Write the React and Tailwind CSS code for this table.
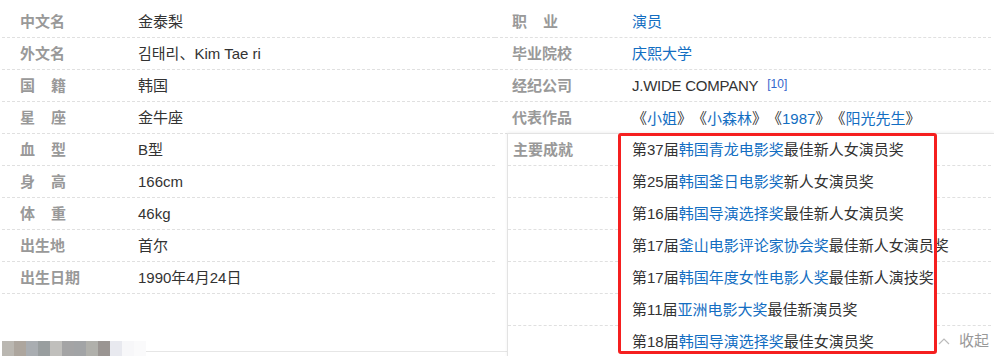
const font = { fontFamily: '"Liberation Sans", Arial, "Noto Sans CJK SC", "Noto Sans CJK KR", sans-serif' };

function Label({ text, wide }) {
  if (wide) {
    return (
      <span className="inline-flex w-[46px] justify-between">
        <span>{text[0]}</span>
        <span>{text[1]}</span>
      </span>
    );
  }
  return <span>{text}</span>;
}

function Row({ label, wide, children, labelPad = 'pl-[18px]', labelWidth = 'w-[136px]' }) {
  return (
    <div className="flex h-[32px] border-b border-dashed border-[#e0e0e0] leading-[31px]">
      <div className={`${labelWidth} ${labelPad} shrink-0 font-bold text-[#999]`}>
        <Label text={label} wide={wide} />
      </div>
      <div className="text-[#333] whitespace-nowrap">{children}</div>
    </div>
  );
}

const A = ({ children }) => <span className="text-[#136ec2]">{children}</span>;
const Q = ({ children }) => (
  <span className="inline-block w-[15px] text-center font-['Noto_Sans_CJK_SC',sans-serif]">{children}</span>
);

const mosaic = ['#bab7b1', '#ada69e', '#a9adb1', '#999e9f', '#c0bfbc', '#a4a4a5', '#a2a4a6', '#b0b0ab', '#9a9592', '#e8e9ef', '#f7f7f9', '#fafafb'];

const awards = [
  ['第37届', '韩国青龙电影奖', '最佳新人女演员奖'],
  ['第25届', '韩国釜日电影奖', '新人女演员奖'],
  ['第16届', '韩国导演选择奖', '最佳新人女演员奖'],
  ['第17届', '釜山电影评论家协会奖', '最佳新人女演员奖'],
  ['第17届', '韩国年度女性电影人奖', '最佳新人演技奖'],
  ['第11届', '亚洲电影大奖', '最佳新演员奖'],
  ['第18届', '韩国导演选择奖', '最佳女演员奖'],
];

export default function App() {
  return (
    <div className="relative h-[356px] w-[994px] overflow-hidden bg-white text-[15px]" style={font}>
      <div className="flex pt-[6px]">
        <div className="w-[495px] shrink-0 pl-[2px]">
          <Row label="中文名">金泰梨</Row>
          <Row label="外文名">김태리、Kim Tae ri</Row>
          <Row label="国籍" wide>韩国</Row>
          <Row label="星座" wide>金牛座</Row>
          <Row label="血型" wide>B型</Row>
          <Row label="身高" wide>166cm</Row>
          <Row label="体重" wide>46kg</Row>
          <Row label="出生地">首尔</Row>
          <Row label="出生日期">1990年4月24日</Row>
        </div>
        <div className="w-[496px] shrink-0">
          <Row label="职业" wide labelPad="pl-[17px]" labelWidth="w-[137px]"><A>演员</A></Row>
          <Row label="毕业院校" labelPad="pl-[17px]" labelWidth="w-[137px]"><A>庆熙大学</A></Row>
          <Row label="经纪公司" labelPad="pl-[17px]" labelWidth="w-[137px]">
            <span className="tracking-[-0.25px]">J.WIDE COMPANY</span>
            <sup className="relative -top-[3px] ml-[9px] text-[12px] text-[#3366cc]">[10]</sup>
          </Row>
          <Row label="代表作品" labelPad="pl-[17px]" labelWidth="w-[137px]">
            <Q>《</Q><A>小姐</A><Q>》</Q><Q>《</Q><A>小森林</A><Q>》</Q><Q>《</Q><A>1987</A><Q>》</Q><Q>《</Q><A>阳光先生</A><Q>》</Q>
          </Row>
        </div>
      </div>

      <div className="mt-[47px] flex h-[20px] pl-[2px]">
        {mosaic.map((c, i) => (
          <div key={i} className="h-full w-[12px]" style={{ backgroundColor: c }} />
        ))}
        <div className="mt-[10px] w-[362px] border-t border-[#e6e6e6]" />
      </div>

      {/* expanded "主要成就" panel */}
      <div className="absolute left-[507px] right-0 top-[133px] h-[260px] border-l border-t border-[#e3e3e3] bg-white shadow-[0_-1px_3px_rgba(0,0,0,0.06)]">
        <div className="flex">
          <div className="w-[110px] shrink-0">
            {awards.map((_, i) => (
              <div key={i} className="h-[32px] border-b border-dashed border-[#e0e0e0] pl-[5px] font-bold leading-[31px] text-[#999]">
                {i === 0 ? '主要成就' : ''}
              </div>
            ))}
          </div>
          <div className="w-[319px] shrink-0 pl-[14px] text-[#333]">
            {awards.map((a, i) => (
              <div key={i} className="h-[32px] whitespace-nowrap leading-[31px]">
                {a[0]}<A>{a[1]}</A>{a[2]}
              </div>
            ))}
          </div>
          <div className="min-w-0 flex-1 pr-[3px]">
            {awards.map((_, i) => (
              <div key={i} className="flex h-[32px] items-center border-b border-dashed border-[#e0e0e0] pl-[1px] text-[#999]">
                {i === awards.length - 1 && (
                  <span className="flex items-center gap-[9px] whitespace-nowrap">
                    <svg width="12" height="7" viewBox="0 0 12 7" fill="none">
                      <polyline points="1,6 6,1 11,6" stroke="#bbb" strokeWidth="1.2" />
                    </svg>
                    <span>收起</span>
                  </span>
                )}
              </div>
            ))}
          </div>
        </div>
        <div className="pointer-events-none absolute left-[110px] -top-px h-[221px] w-[319px] rounded-[3px] border-[3px] border-[#f51f1f]" />
      </div>
    </div>
  );
}
